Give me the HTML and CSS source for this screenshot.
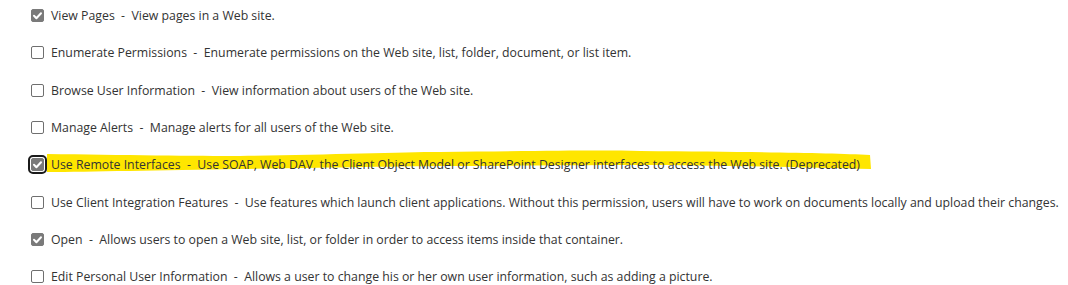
FILE: index.html
```html
<!DOCTYPE html>
<html lang="en">
<head>
    <meta charset="UTF-8">
    <title>Permissions</title>
    <link rel="stylesheet" href="styles.css">
</head>
<body>
    <div class="perm-list">
        <div class="perm-row">
            <span class="box checked"><svg viewBox="0 0 13 13"><path d="M3 6.8 L5.4 9.2 L10 4.2"/></svg></span>
            <span class="perm-text">View Pages &nbsp;-&nbsp; View pages in a Web site.</span>
        </div>
        <div class="perm-row">
            <span class="box"></span>
            <span class="perm-text">Enumerate Permissions &nbsp;-&nbsp; Enumerate permissions on the Web site, list, folder, document, or list item.</span>
        </div>
        <div class="perm-row">
            <span class="box"></span>
            <span class="perm-text">Browse User Information &nbsp;-&nbsp; View information about users of the Web site.</span>
        </div>
        <div class="perm-row">
            <span class="box"></span>
            <span class="perm-text">Manage Alerts &nbsp;-&nbsp; Manage alerts for all users of the Web site.</span>
        </div>
        <div class="perm-row">
            <svg class="marker" viewBox="0 0 1068 40" preserveAspectRatio="none">
                <path d="M47 7 C120 8 200 9 240 9 C320 8 400 5 440 5 C540 4 600 3 640 4 C760 5 830 6 870 8 L871 22 C800 20 700 18 640 18 C560 18 500 19 440 19 C360 20 300 21 240 22 C160 23 90 25 47 25 Z"/>
            </svg>
            <span class="box checked focus"><svg viewBox="0 0 13 13"><path d="M3 6.8 L5.4 9.2 L10 4.2"/></svg></span>
            <span class="perm-text">Use Remote Interfaces &nbsp;-&nbsp; Use SOAP, Web DAV, the Client Object Model or SharePoint Designer interfaces to access the Web site. (Deprecated)</span>
        </div>
        <div class="perm-row">
            <span class="box"></span>
            <span class="perm-text">Use Client Integration Features &nbsp;-&nbsp; Use features which launch client applications. Without this permission, users will have to work on documents locally and upload their changes.</span>
        </div>
        <div class="perm-row">
            <span class="box checked"><svg viewBox="0 0 13 13"><path d="M3 6.8 L5.4 9.2 L10 4.2"/></svg></span>
            <span class="perm-text">Open &nbsp;-&nbsp; Allows users to open a Web site, list, or folder in order to access items inside that container.</span>
        </div>
        <div class="perm-row">
            <span class="box"></span>
            <span class="perm-text">Edit Personal User Information &nbsp;-&nbsp; Allows a user to change his or her own user information, such as adding a picture.</span>
        </div>
    </div>
</body>
</html>
```

FILE: styles.css
```css
body {
    margin: 0;
    background: #ffffff;
    font-family: "Open Sans", "Noto Sans", Arial, sans-serif;
    font-size: 12.3px;
    color: #333333;
}
.perm-list {
    margin-top: -3px;
    padding-left: 31px;
}
.perm-row {
    position: relative;
    display: flex;
    align-items: center;
    height: 37.3px;
    white-space: nowrap;
}
.perm-text {
    position: relative;
    margin-left: 7px;
}
.box {
    position: relative;
    box-sizing: border-box;
    width: 13px;
    height: 13px;
    border: 1px solid #6f6f6f;
    border-radius: 2px;
    background: #ffffff;
    flex: none;
}
.box svg {
    position: absolute;
    left: -1px;
    top: -1px;
    width: 13px;
    height: 13px;
}
.box svg path {
    fill: none;
    stroke: #ffffff;
    stroke-width: 2;
    stroke-linecap: round;
    stroke-linejoin: round;
}
.box.checked {
    background: #7a7a7a;
    border-color: #7a7a7a;
}
.box.focus {
    outline: 2px solid #1a1a1a;
    outline-offset: 1px;
    border-radius: 2px;
}
.marker {
    position: absolute;
    left: -31px;
    top: 1px;
    width: 1068px;
    height: 40px;
}
.marker path {
    fill: #ffe600;
}
```
